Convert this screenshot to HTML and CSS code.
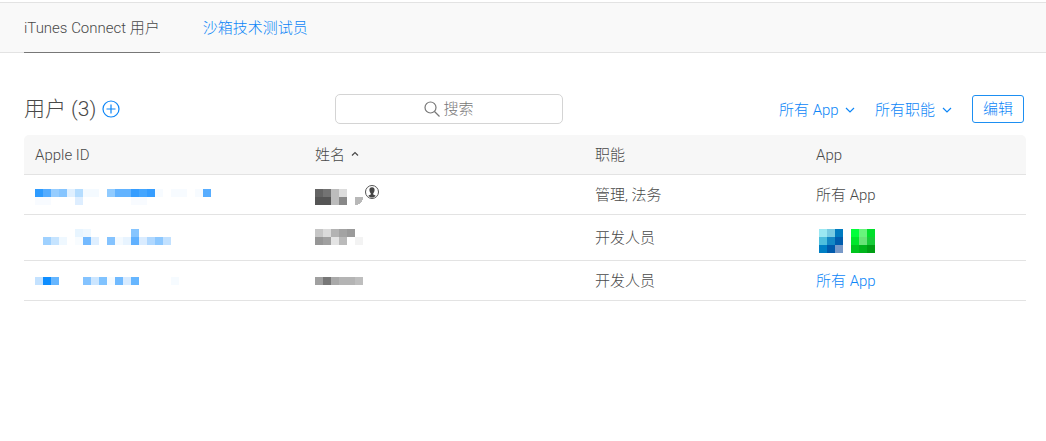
FILE: index.html
```html
<!DOCTYPE html>
<html lang="zh-CN">
<head>
    <meta charset="UTF-8">
    <meta name="viewport" content="width=device-width, initial-scale=1.0">
    <title>用户</title>
    <link rel="stylesheet" href="styles.css">
</head>
<body>
    <!-- 导航 -->
    <nav class="tabs">
        <a class="tab active" href="#users">iTunes Connect 用户</a>
        <a class="tab" href="#testers">沙箱技术测试员</a>
    </nav>

    <main class="content">
        <!-- 工具栏 -->
        <div class="toolbar">
            <div class="heading">
                <h1>用户 (3)</h1>
                <button class="add" type="button" aria-label="添加用户">
                    <svg width="18" height="18" viewBox="0 0 18 18"><circle cx="9" cy="9" r="8"/><path d="M9 4.5v9M4.5 9h9"/></svg>
                </button>
            </div>
            <div class="search">
                <svg width="16" height="16" viewBox="0 0 16 16"><circle cx="6.5" cy="6.5" r="5.5"/><path d="M10.5 10.5l5 5"/></svg>
                <input type="text" placeholder="搜索" aria-label="搜索">
            </div>
            <div class="filters">
                <label class="filter">
                    <select aria-label="App"><option>所有 App</option></select>
                    <svg width="10" height="6" viewBox="0 0 10 6"><path d="M1 1l4 4 4-4"/></svg>
                </label>
                <label class="filter">
                    <select aria-label="职能"><option>所有职能</option></select>
                    <svg width="10" height="6" viewBox="0 0 10 6"><path d="M1 1l4 4 4-4"/></svg>
                </label>
                <button class="edit" type="button">编辑</button>
            </div>
        </div>

        <!-- 用户列表 -->
        <table class="users">
            <thead>
                <tr>
                    <th class="col-id">Apple ID</th>
                    <th class="col-name">姓名 <svg class="sort" width="8" height="6" viewBox="0 0 8 6"><path d="M1 4.5L4 1.5l3 3"/></svg></th>
                    <th class="col-role">职能</th>
                    <th>App</th>
                </tr>
            </thead>
            <tbody>
                <tr class="owner">
                    <td>
                        <svg class="masked" width="176" height="16" viewBox="0 0 22 2">
                            <path fill="#2d9bff" d="M0 0h1v1H0z"/><path fill="#54acff" d="M1 0h1v1H1z"/><path fill="#96cdff" d="M2 0h1v1H2z"/><path fill="#86c5ff" d="M3 0h1v1H3z"/><path fill="#e0f0ff" d="M4 0h1v1H4z"/><path fill="#b5ddff" d="M5 0h1v1H5z"/><path fill="#f4faff" d="M6 0h2v1H6z"/>
                            <path fill="#90cbff" d="M9 0h1v1H9z"/><path fill="#62b3ff" d="M10 0h2v1h-2z"/><path fill="#359dff" d="M12 0h1v1h-1z"/><path fill="#44a6ff" d="M13 0h1v1h-1z"/><path fill="#359dff" d="M14 0h1v1h-1z"/><path fill="#f7fbff" d="M15 0h1v1h-1zM17 0h2v1h-2zM20 0h1v1h-1z"/><path fill="#57adff" d="M21 0h1v1h-1z"/>
                            <path fill="#f8fbff" d="M0 1h2v1H0zM12 1h2v1h-2z"/><path fill="#deeeff" d="M5 1h1v1H5z"/>
                        </svg>
                    </td>
                    <td>
                        <span class="person">
                            <svg class="masked" width="48" height="16" viewBox="0 0 6 2">
                                <path fill="#646464" d="M0 0h1v1H0z"/><path fill="#737373" d="M1 0h1v1H1z"/><path fill="#bcbcbc" d="M2 0h1v2H2z"/><path fill="#dcdcdc" d="M3 0h1v1H3z"/>
                                <path fill="#555" d="M0 1h2v1H0z"/><path fill="#888" d="M3 1h1v1H3z"/><path fill="#b8b8b8" d="M5 1h1q0 1-1 1z"/>
                            </svg>
                            <svg class="agent" width="16" height="16" viewBox="0 0 16 16">
                                <circle cx="8" cy="8" r="6.5" fill="#fff" stroke="#555"/>
                                <path fill="#444" d="M8 3.2c-1.8 0-2.7 1.2-2.6 2.9.1 1.5.7 2.6 1.4 3.3v1.2c-.7.5-1.7.6-2.5 1.2 1 1.1 2.2 1.8 3.7 1.8s2.7-.7 3.7-1.8c-.8-.6-1.8-.7-2.5-1.2V9.4c.7-.7 1.3-1.8 1.4-3.3.1-1.7-.8-2.9-2.6-2.9z"/>
                            </svg>
                        </span>
                    </td>
                    <td>管理, 法务</td>
                    <td>所有 App</td>
                </tr>
                <tr class="tall">
                    <td>
                        <svg class="masked" width="136" height="16" viewBox="0 0 17 2">
                            <path fill="#e8f5ff" d="M5 0h1v1H5z"/><path fill="#eff8ff" d="M6 0h1v1H6z"/><path fill="#86c5ff" d="M12 0h1v1h-1z"/>
                            <path fill="#9fd1ff" d="M1 1h1v1H1z"/><path fill="#c6e4ff" d="M2 1h1v1H2z"/><path fill="#eff8ff" d="M3 1h1v1H3z"/><path fill="#f8fcff" d="M5 1h1v1H5z"/><path fill="#74baff" d="M6 1h1v1H6z"/><path fill="#dfefff" d="M7 1h1v1H7z"/><path fill="#84c3ff" d="M9 1h1v1H9z"/>
                            <path fill="#f4faff" d="M10 1h1v1h-1z"/><path fill="#e8f4ff" d="M11 1h1v1h-1z"/><path fill="#60b1ff" d="M12 1h1v1h-1z"/><path fill="#daecff" d="M13 1h1v1h-1z"/><path fill="#b0d8ff" d="M14 1h1v1h-1z"/><path fill="#8dc8ff" d="M15 1h1v1h-1z"/><path fill="#c2e1ff" d="M16 1h1v1h-1z"/>
                        </svg>
                    </td>
                    <td>
                        <svg class="masked" width="48" height="16" viewBox="0 0 6 2">
                            <path fill="#c6c6c6" d="M0 0h1v1H0z"/><path fill="#dadada" d="M1 0h1v1H1z"/><path fill="#b3b3b3" d="M2 0h1v1H2z"/><path fill="#a3a3a3" d="M3 0h1v1H3z"/><path fill="#9a9a9a" d="M4 0h1v1H4z"/>
                            <path fill="#969696" d="M0 1h1v1H0z"/><path fill="#a0a0a0" d="M1 1h1v1H1z"/><path fill="#e4e4e4" d="M2 1h1v1H2z"/><path fill="#bababa" d="M3 1h1v1H3z"/><path fill="#f3f3f3" d="M5 1h1v1H5z"/>
                        </svg>
                    </td>
                    <td>开发人员</td>
                    <td>
                        <span class="apps">
                            <svg width="24" height="24" viewBox="0 0 3 3">
                                <path fill="#9be8f2" d="M0 0h1v1H0z"/><path fill="#78cbe2" d="M1 0h1v1H1z"/><path fill="#007bc0" d="M2 0h1v1H2z"/>
                                <path fill="#4fbfdd" d="M0 1h1v1H0z"/><path fill="#1488c5" d="M1 1h1v1H1z"/><path fill="#005dae" d="M2 1h1v1H2z"/>
                                <path fill="#007fc4" d="M0 2h1v1H0z"/><path fill="#005aac" d="M1 2h1v1H1z"/><path fill="#7899c8" d="M2 2h1v1H2z"/>
                            </svg>
                            <svg width="24" height="24" viewBox="0 0 3 3">
                                <path fill="#00ff3a" d="M0 0h1v1H0z"/><path fill="#68f47c" d="M1 0h1v1H1z"/><path fill="#00df2b" d="M2 0h1v1H2z"/>
                                <path fill="#00e62b" d="M0 1h1v1H0z"/><path fill="#68e477" d="M1 1h1v1H1z"/><path fill="#17cb38" d="M2 1h1v1H2z"/>
                                <path fill="#00c51e" d="M0 2h1v1H0z"/><path fill="#00b51b" d="M1 2h1v1H1z"/><path fill="#009e14" d="M2 2h1v1H2z"/>
                            </svg>
                        </span>
                    </td>
                </tr>
                <tr>
                    <td>
                        <svg class="masked" width="144" height="8" viewBox="0 0 18 1">
                            <path fill="#c4e2ff" d="M0 0h1v1H0z"/><path fill="#0d8dff" d="M1 0h1v1H1z"/><path fill="#66b6ff" d="M2 0h1v1H2zM12 0h1v1h-1z"/><path fill="#84c3ff" d="M6 0h1v1H6z"/><path fill="#cce6ff" d="M7 0h1v1H7z"/><path fill="#80c3ff" d="M8 0h1v1H8z"/>
                            <path fill="#f6fbff" d="M9 0h1v1H9zM17 0h1v1h-1z"/><path fill="#70baff" d="M10 0h1v1h-1z"/><path fill="#d8ebff" d="M11 0h1v1h-1z"/>
                        </svg>
                    </td>
                    <td>
                        <svg class="masked" width="48" height="8" viewBox="0 0 6 1">
                            <path fill="#a0a0a0" d="M0 0h1v1H0z"/><path fill="#777" d="M1 0h1v1H1z"/><path fill="#a9a9a9" d="M2 0h1v1H2z"/><path fill="#b4b4b4" d="M3 0h2v1H3z"/><path fill="#bebebe" d="M5 0h1v1H5z"/>
                        </svg>
                    </td>
                    <td>开发人员</td>
                    <td><a href="#apps">所有 App</a></td>
                </tr>
            </tbody>
        </table>
    </main>
</body>
</html>
```
FILE: styles.css
```css
* {
    box-sizing: border-box;
}
body {
    margin: 0;
    padding-top: 2px;
    background: #fff;
    color: #494949;
    font-family: Roboto, "Noto Sans CJK SC", sans-serif;
    font-size: 15px;
    font-weight: 300;
    line-height: 20px;
}
button, input, select {
    font: inherit;
}
a {
    color: #0d86f7;
    text-decoration: none;
}
svg {
    display: block;
    flex: none;
    fill: none;
}
.masked, .apps svg {
    shape-rendering: crispEdges;
}

/* 导航 */
.tabs {
    display: flex;
    gap: 43px;
    padding: 0 24px;
    background: #f9f9f9;
    border-top: 1px solid #e3e3e3;
    box-shadow: inset 0 -1px #e3e3e3;
}
.tab {
    padding: 15px 0 14px;
    border-bottom: 1px solid transparent;
}
.tab.active {
    color: #494949;
    border-color: #777;
}

/* 工具栏 */
.content {
    padding: 41px 20px 0 24px;
}
.toolbar {
    display: grid;
    grid-template-columns: 31% 228px 1fr;
    align-items: center;
    margin-bottom: 11px;
}
.heading {
    display: flex;
    align-items: center;
    gap: 6px;
}
.heading h1 {
    margin: 0;
    font-size: 21px;
    font-weight: 300;
    line-height: 30px;
}
.add {
    padding: 0;
    border: 0;
    background: none;
}
.add svg, .filter svg {
    stroke: #0d86f7;
    stroke-width: 1.2;
}
.search {
    position: relative;
}
.search svg {
    position: absolute;
    top: 7px;
    left: calc(50% - 25px);
    stroke: #777;
    stroke-width: 1.2;
}
.search input {
    display: block;
    width: 100%;
    height: 30px;
    padding: 0 0 0 20px;
    border: 1px solid #d4d4d4;
    border-radius: 5px;
    background: none;
    text-align: center;
    appearance: none;
}
.search input::placeholder {
    color: #777;
}
.filters {
    display: flex;
    justify-content: flex-end;
    align-items: center;
    gap: 20px;
    padding-right: 2px;
}
.filter {
    display: flex;
    align-items: center;
    gap: 6px;
    padding-top: 2px;
}
.filter select {
    padding: 0;
    border: 0;
    background: none;
    color: #0d86f7;
    appearance: none;
}
.edit {
    height: 28px;
    padding: 0 10px;
    border: 1px solid #1d8ff2;
    border-radius: 3px;
    background: #fff;
    color: #0d86f7;
}

/* 用户列表 */
.users {
    width: 100%;
    border-spacing: 0;
    table-layout: fixed;
}
.users th, .users td {
    height: 40px;
    padding: 0 0 0 11px;
    border-bottom: 1px solid #e3e3e3;
    text-align: left;
    font-weight: 300;
}
.users th {
    background: #f7f7f7;
}
.users th:first-child {
    border-top-left-radius: 5px;
}
.users th:last-child {
    border-top-right-radius: 5px;
}
.users .tall td {
    height: 46px;
}
.owner .masked {
    margin-top: 4px;
}
.tall .masked {
    margin-bottom: 2px;
}
.col-id, .col-name {
    width: 280px;
}
.col-role {
    width: 221px;
}
.sort {
    display: inline-block;
    margin-left: 2px;
    vertical-align: 3px;
    stroke: #494949;
    stroke-width: 1.2;
}
.person {
    display: flex;
    align-items: center;
}
.agent {
    margin: 0 0 5px 1px;
}
.apps {
    display: flex;
    gap: 8px;
    padding: 6px 0 0 3px;
}
```
